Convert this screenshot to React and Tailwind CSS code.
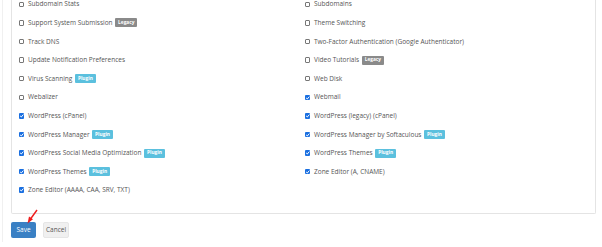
import React from "react";

const left = [
  { label: "Subdomain Stats" },
  { label: "Support System Submission", badge: "Legacy" },
  { label: "Track DNS" },
  { label: "Update Notification Preferences" },
  { label: "Virus Scanning", badge: "Plugin" },
  { label: "Webalizer" },
  { label: "WordPress (cPanel)", checked: true },
  { label: "WordPress Manager", badge: "Plugin", checked: true },
  { label: "WordPress Social Media Optimization", badge: "Plugin", checked: true },
  { label: "WordPress Themes", badge: "Plugin", checked: true },
  { label: "Zone Editor (AAAA, CAA, SRV, TXT)", checked: true },
];

const right = [
  { label: "Subdomains" },
  { label: "Theme Switching" },
  { label: "Two-Factor Authentication (Google Authenticator)" },
  { label: "Video Tutorials", badge: "Legacy" },
  { label: "Web Disk" },
  { label: "Webmail", checked: true },
  { label: "WordPress (legacy) (cPanel)", checked: true },
  { label: "WordPress Manager by Softaculous", badge: "Plugin", checked: true },
  { label: "WordPress Themes", badge: "Plugin", checked: true },
  { label: "Zone Editor (A, CNAME)", checked: true },
];

const Box = ({ checked }) =>
  checked ? (
    <span className="flex h-[5.5px] w-[5.5px] shrink-0 items-center justify-center rounded-[1px] bg-[#1a6fe0]">
      <svg viewBox="0 0 10 10" className="h-[5.5px] w-[5.5px]">
        <path d="M2 5.2 L4.2 7.3 L8 2.8" fill="none" stroke="white" strokeWidth="1.8" />
      </svg>
    </span>
  ) : (
    <span className="h-[5.5px] w-[5.5px] shrink-0 rounded-[1px] border border-[#777] bg-white" />
  );

const Row = ({ item }) => (
  <div className="flex h-[18.6px] items-center">
    <Box checked={item.checked} />
    <span className="ml-[4px] whitespace-nowrap text-[6.5px] text-[#555]">{item.label}</span>
    {item.badge && (
      <span
        className={
          "ml-[2.5px] flex h-[9px] items-center rounded-[1px] px-[3px] text-[4.8px] font-bold text-white " +
          (item.badge === "Legacy" ? "bg-[#8a8a8a]" : "bg-[#5bc0de]")
        }
      >
        {item.badge}
      </span>
    )}
  </div>
);

export default function App() {
  return (
    <div
      className="relative h-[247px] w-[602px] overflow-hidden bg-white"
      style={{ fontFamily: '"Open Sans", "Liberation Sans", sans-serif' }}
    >
      <div className="ml-[2px] h-full border-l border-[#f0f0f0] pl-[8px] pr-[6px]">
        <div className="-mt-[5px] rounded-b-[2px] border-x border-b border-[#e4e4e4] pb-[13px] pl-[6.5px]">
          <div className="grid grid-cols-[286px_1fr]">
            <div>
              {left.map((item) => (
                <Row key={item.label} item={item} />
              ))}
            </div>
            <div>
              {right.map((item) => (
                <Row key={item.label + "r"} item={item} />
              ))}
            </div>
          </div>
        </div>
        <div className="mt-[8.5px] flex gap-[7px]">
          <button className="h-[16px] w-[25px] rounded-[2px] bg-[#3a80c4] text-[6.5px] text-white">Save</button>
          <button className="h-[16px] w-[26px] rounded-[2px] border border-[#e6e6e6] bg-[#f0f0f0] text-[6.5px] text-[#555]">
            Cancel
          </button>
        </div>
      </div>
      <svg className="absolute left-0 top-0" width="602" height="247">
        <line x1="37" y1="210" x2="30.5" y2="219" stroke="#ee1c1c" strokeWidth="1.4" />
        <polygon points="27.5,223.5 29,216.5 33,219.3" fill="#ee1c1c" />
      </svg>
    </div>
  );
}
